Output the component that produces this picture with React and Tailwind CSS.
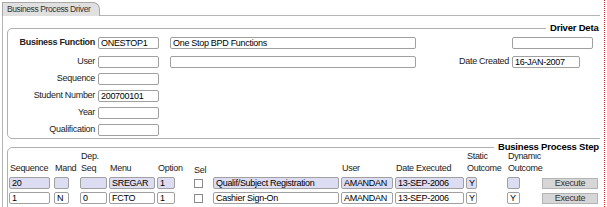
import React from "react";

const F = { fontFamily: '"Liberation Sans", Arial, sans-serif' };

function Box({ w, value = "", dis = false, className = "" }) {
  return (
    <div
      className={`h-[12px] border border-[#a0a0a0] rounded-[2px] pl-[2px] leading-[10px] overflow-hidden whitespace-nowrap text-black ${
        dis ? "bg-[#dcdcf2]" : "bg-white"
      } ${className}`}
      style={{ width: w }}
    >
      {value}
    </div>
  );
}

function FormRow({ label, bold, children, className = "" }) {
  return (
    <div className={`flex items-center h-[12px] ${className}`}>
      <div
        className={`w-[87px] text-right whitespace-nowrap text-[#222] ${
          bold ? "font-bold" : ""
        }`}
      >
        {label}
      </div>
      <div className="ml-[3px] flex items-center">{children}</div>
    </div>
  );
}

const rows = [
  {
    seq: "20",
    mand: "",
    dep: "",
    menu: "SREGAR",
    opt: "1",
    desc: "Qualif/Subject Registration",
    user: "AMANDAN",
    date: "13-SEP-2006",
    st: "Y",
    dyn: "",
    dis: true,
  },
  {
    seq: "1",
    mand: "N",
    dep: "0",
    menu: "FCTO",
    opt: "1",
    desc: "Cashier Sign-On",
    user: "AMANDAN",
    date: "13-SEP-2006",
    st: "Y",
    dyn: "Y",
    dis: false,
  },
];

const cols =
  "grid grid-cols-[45px_26px_29px_48px_37px_19px_128px_54px_71px_41px_35px_56px]";

export default function App() {
  return (
    <div
      className="w-[607px] h-[207px] overflow-hidden bg-white flex text-[9px] tracking-[-0.3px]"
      style={F}
    >
      <div className="w-[605px] h-[207px] border-r border-dotted border-[#e02020] pl-[2px] pt-[2px]">
        {/* tab row */}
        <div className="w-[598px] h-[14px] flex">
          <div className="w-[98px] h-[14px] border border-b-0 border-[#a8a8a8] rounded-tr-[7px] bg-[#e0e0e0] pl-[4px] text-[8.5px] tracking-[-0.4px] leading-[12px] text-[#333] whitespace-nowrap">
            Business Process Driver
          </div>
          <div className="flex-1 border-b border-[#b4b4b4]" />
        </div>
        {/* content */}
        <div className="w-[598px] h-[191px] border-l border-[#b4b4b4] overflow-hidden">
          {/* Driver Details panel */}
          <div className="relative ml-[4px] mt-[12px] w-[640px] h-[111px] border border-[#b0b0b0] rounded-[5px] pt-[8px]">
            <div className="absolute left-[538px] top-[-7px] bg-white pl-[4px] pr-[2px] text-[9.5px] tracking-[-0.2px] font-bold leading-[12px] text-black whitespace-nowrap">
              Driver Deta
            </div>
            <FormRow label="Business Function" bold>
              <Box w="61px" value="ONESTOP1" />
              <Box w="246px" value="One Stop BPD Functions" className="ml-[11px]" />
              <Box w="81px" className="ml-[96px]" />
            </FormRow>
            <FormRow label="User" className="mt-[7px]">
              <Box w="61px" />
              <Box w="246px" className="ml-[11px]" />
              <div className="ml-[3px] w-[90px] text-right whitespace-nowrap text-[#222]">
                Date Created
              </div>
              <Box w="68px" value="16-JAN-2007" className="ml-[3px]" />
            </FormRow>
            <FormRow label="Sequence" className="mt-[5px]">
              <Box w="61px" />
            </FormRow>
            <FormRow label="Student Number" className="mt-[5px]">
              <Box w="61px" value="200700101" />
            </FormRow>
            <FormRow label="Year" className="mt-[5px]">
              <Box w="61px" />
            </FormRow>
            <FormRow label="Qualification" className="mt-[5px]">
              <Box w="61px" />
            </FormRow>
          </div>

          {/* Business Process Steps panel */}
          <div className="relative ml-[4px] mt-[8px] w-[640px] h-[80px] border border-[#b0b0b0] rounded-[5px] pl-[1px] pt-[2px]">
            <div className="absolute left-[486px] top-[-7px] bg-white pl-[4px] pr-[1px] text-[9.5px] tracking-[-0.2px] font-bold leading-[12px] text-black whitespace-nowrap">
              Business Process Step
            </div>
            <div className={`${cols} items-end leading-[12px] text-[#222]`}>
              <div className="pl-[1px]">Sequence</div>
              <div className="pl-[1px]">Mand</div>
              <div className="pl-[1px]">
                Dep.
                <br />
                Seq
              </div>
              <div className="pl-[1px]">Menu</div>
              <div className="pl-[1px]">Option</div>
              <div className="-mb-[2px]">Sel</div>
              <div />
              <div className="pl-[1px]">User</div>
              <div className="pl-[1px] whitespace-nowrap">Date Executed</div>
              <div className="pl-[1px]">
                Static
                <br />
                Outcome
              </div>
              <div className="pl-[1px]">
                Dynamic
                <br />
                Outcome
              </div>
              <div />
            </div>
            {rows.map((r, i) => (
              <div key={i} className={`${cols} items-center mt-[3px]`}>
                <Box w="41px" value={r.seq} dis={r.dis} />
                <Box w="15px" value={r.mand} dis={r.dis} />
                <Box w="27px" value={r.dep} dis={r.dis} />
                <Box w="46px" value={r.menu} dis={r.dis} />
                <Box w="18px" value={r.opt} dis={r.dis} />
                <div className="h-[12px] flex items-center">
                  <div className="w-[9px] h-[9px] border border-[#8a8a8a] bg-white" />
                </div>
                <Box w="126px" value={r.desc} dis={r.dis} />
                <Box w="52px" value={r.user} dis={r.dis} />
                <Box w="69px" value={r.date} dis={r.dis} />
                <Box w="11px" value={r.st} dis={r.dis} />
                <Box w="13px" value={r.dyn} dis={r.dis} />
                <div className="w-[56px] h-[11px] border border-[#b4b4b4] bg-[#d6d6d6] text-center leading-[9px] text-[#333]">
                  Execute
                </div>
              </div>
            ))}
          </div>
        </div>
      </div>
    </div>
  );
}
